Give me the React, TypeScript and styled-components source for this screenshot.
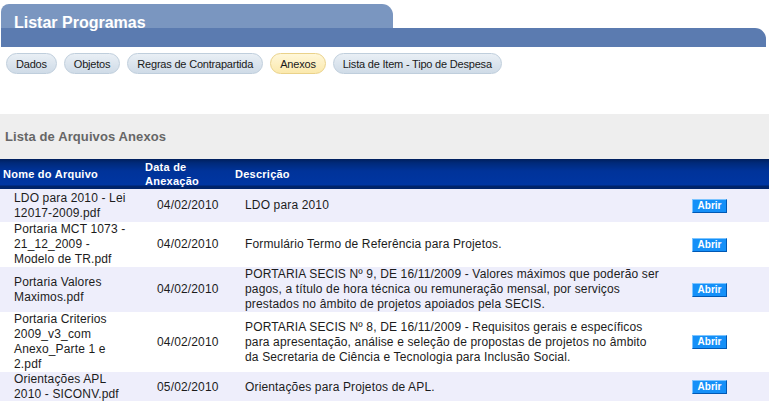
import styled, { createGlobalStyle } from "styled-components";

const GlobalStyle = createGlobalStyle`
  html, body {
    margin: 0;
    padding: 0;
    background: #ffffff;
  }
  body {
    font-family: "Liberation Sans", Arial, sans-serif;
  }
`;

const Page = styled.div`
  width: 769px;
  padding-top: 4px;
`;

const TitleTab = styled.div`
  width: 392px;
  height: 24px;
  margin-left: 1px;
  background: #7a96c0;
  border-radius: 8px 11px 0 0;
`;

const Title = styled.h1`
  margin: 0;
  padding: 10px 0 0 13px;
  font-size: 16px;
  line-height: 18px;
  font-weight: bold;
  color: #ffffff;
  white-space: nowrap;
`;

const TitleBand = styled.div`
  width: 765px;
  height: 19px;
  margin-left: 1px;
  background: #5b7bb0;
  border-top-right-radius: 11px;
`;

const Tabs = styled.div`
  display: flex;
  gap: 7px;
  margin: 6px 0 0 6px;
`;

const Pill = styled.span<{ $active?: boolean }>`
  display: inline-flex;
  align-items: center;
  box-sizing: border-box;
  height: 21px;
  padding: 0 9px;
  border-radius: 11px;
  font-size: 11px;
  letter-spacing: -0.2px;
  color: #1a1a1a;
  white-space: nowrap;
  border: 1px solid ${(p) => (p.$active ? "#ead28a" : "#bfcedc")};
  background: ${(p) =>
    p.$active
      ? "linear-gradient(#fff7d9, #fbe9ad)"
      : "linear-gradient(#e9eff5, #cfdbe7)"};
`;

const Section = styled.div`
  margin-top: 40px;
  height: 45px;
  display: flex;
  align-items: center;
  padding-left: 5px;
  background: #eeeeee;
  color: #666666;
  font-size: 13px;
  letter-spacing: 0.1px;
  font-weight: bold;
`;

const Table = styled.table`
  width: 769px;
  border-collapse: collapse;
  table-layout: fixed;
  font-size: 12px;
  letter-spacing: 0.15px;
  color: #1c1c1c;
`;

const HeadRow = styled.tr`
  height: 30px;
  background: linear-gradient(
    to bottom,
    #001f5c 0,
    #002a7a 4px,
    #00339a 12px,
    #0036a2 26px,
    #00246a 27px,
    #00246a 30px
  );
`;

const Th = styled.th`
  padding: 0 3px 1px 3px;
  text-align: left;
  vertical-align: middle;
  font-size: 11px;
  line-height: 14px;
  letter-spacing: 0.25px;
  font-weight: bold;
  color: #ffffff;
`;

const Row = styled.tr<{ $odd: boolean }>`
  background: ${(p) => (p.$odd ? "#eeeefb" : "#ffffff")};
`;

const Td = styled.td<{ $left: number; $right?: number }>`
  padding: 0 ${(p) => p.$right ?? 4}px 0 ${(p) => p.$left}px;
  vertical-align: middle;
  line-height: 15px;
`;

const OpenButton = styled.button`
  width: 35px;
  height: 14px;
  padding: 0;
  font-family: "Liberation Sans", Arial, sans-serif;
  font-size: 10px;
  font-weight: bold;
  line-height: 12px;
  letter-spacing: 0;
  color: #ffffff;
  background: #1590f8;
  border: 1px solid;
  border-color: #7cc4ff #0058b4 #0058b4 #7cc4ff;
  display: block;
`;

const files = [
  {
    name: "LDO para 2010 - Lei 12017-2009.pdf",
    date: "04/02/2010",
    desc: "LDO para 2010",
    height: 33,
  },
  {
    name: "Portaria MCT 1073 - 21_12_2009 - Modelo de TR.pdf",
    date: "04/02/2010",
    desc: "Formulário Termo de Referência para Projetos.",
  },
  {
    name: "Portaria Valores Maximos.pdf",
    date: "04/02/2010",
    desc: "PORTARIA SECIS Nº 9, DE 16/11/2009 - Valores máximos que poderão ser pagos, a título de hora técnica ou remuneração mensal, por serviços prestados no âmbito de projetos apoiados pela SECIS.",
  },
  {
    name: "Portaria Criterios 2009_v3_com Anexo_Parte 1 e 2.pdf",
    date: "04/02/2010",
    desc: "PORTARIA SECIS Nº 8, DE 16/11/2009 - Requisitos gerais e específicos para apresentação, análise e seleção de propostas de projetos no âmbito da Secretaria de Ciência e Tecnologia para Inclusão Social.",
  },
  {
    name: "Orientações APL 2010 - SICONV.pdf",
    date: "05/02/2010",
    desc: "Orientações para Projetos de APL.",
  },
];

const tabs = [
  "Dados",
  "Objetos",
  "Regras de Contrapartida",
  "Anexos",
  "Lista de Item - Tipo de Despesa",
];

export default function App() {
  return (
    <Page>
      <GlobalStyle />
      <TitleTab>
        <Title>Listar Programas</Title>
      </TitleTab>
      <TitleBand />
      <Tabs>
        {tabs.map((t) => (
          <Pill key={t} $active={t === "Anexos"}>
            {t}
          </Pill>
        ))}
      </Tabs>
      <Section>Lista de Arquivos Anexos</Section>
      <Table>
        <colgroup>
          <col style={{ width: 142 }} />
          <col style={{ width: 90 }} />
          <col style={{ width: 448 }} />
          <col />
        </colgroup>
        <thead>
          <HeadRow>
            <Th>Nome do Arquivo</Th>
            <Th>
              Data de
              <br />
              Anexação
            </Th>
            <Th>Descrição</Th>
            <Th />
          </HeadRow>
        </thead>
        <tbody>
          {files.map((f, i) => (
            <Row key={f.name} $odd={i % 2 === 0} style={f.height ? { height: f.height } : undefined}>
              <Td $left={14} $right={14}>
                {f.name}
              </Td>
              <Td $left={15}>{f.date}</Td>
              <Td $left={13} $right={17}>
                {f.desc}
              </Td>
              <Td $left={12}>
                <OpenButton>Abrir</OpenButton>
              </Td>
            </Row>
          ))}
        </tbody>
      </Table>
    </Page>
  );
}
